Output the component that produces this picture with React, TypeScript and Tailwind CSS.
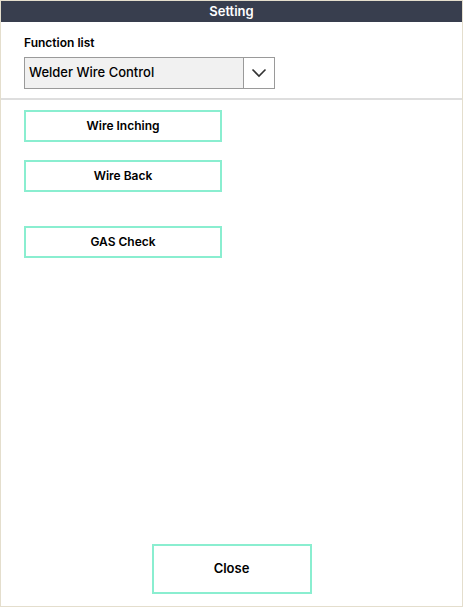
import React from "react";

const font = { fontFamily: "Inter, 'Noto Sans', sans-serif" };

function ActionButton({ label, className = "" }: { label: string; className?: string }) {
  return (
    <button
      className={
        "flex h-[32px] w-[198px] items-center justify-center border-2 border-[#8aeed0] bg-white text-[12px] font-semibold text-black " +
        className
      }
    >
      {label}
    </button>
  );
}

export default function App() {
  return (
    <div
      className="flex h-[607px] w-[463px] flex-col border border-[#e4decd] bg-white text-black"
      style={font}
    >
      <div className="flex h-[21px] items-center justify-center bg-[#383e4e] text-[13px] font-semibold text-white">
        Setting
      </div>
      <div className="px-[23px] pt-[13px] pb-[9px]">
        <div className="h-[16px] text-[12px] font-semibold leading-[16px]">Function list</div>
        <div className="mt-[6px] flex h-[32px] w-[251px] border border-[#9a9a9a]">
          <div className="flex flex-1 items-center bg-[#f1f1f1] pl-[4px] text-[13px] font-medium">
            Welder Wire Control
          </div>
          <div className="flex w-[31px] items-center justify-center border-l border-[#9a9a9a] bg-white">
            <svg width="16" height="10" viewBox="0 0 16 10" fill="none">
              <path d="M1.5 1.5 L8 8 L14.5 1.5" stroke="#333" strokeWidth="1.6" />
            </svg>
          </div>
        </div>
      </div>
      <div className="h-[2px] bg-[#dedede]" />
      <div className="flex flex-col px-[23px] pt-[10px]">
        <ActionButton label="Wire Inching" />
        <ActionButton label="Wire Back" className="mt-[18px]" />
        <ActionButton label="GAS Check" className="mt-[34px]" />
      </div>
      <div className="flex flex-1 items-end justify-center pb-[12px]">
        <button className="flex h-[50px] w-[160px] items-center justify-center border-2 border-[#8aeed0] bg-white text-[13px] font-semibold">
          Close
        </button>
      </div>
    </div>
  );
}
